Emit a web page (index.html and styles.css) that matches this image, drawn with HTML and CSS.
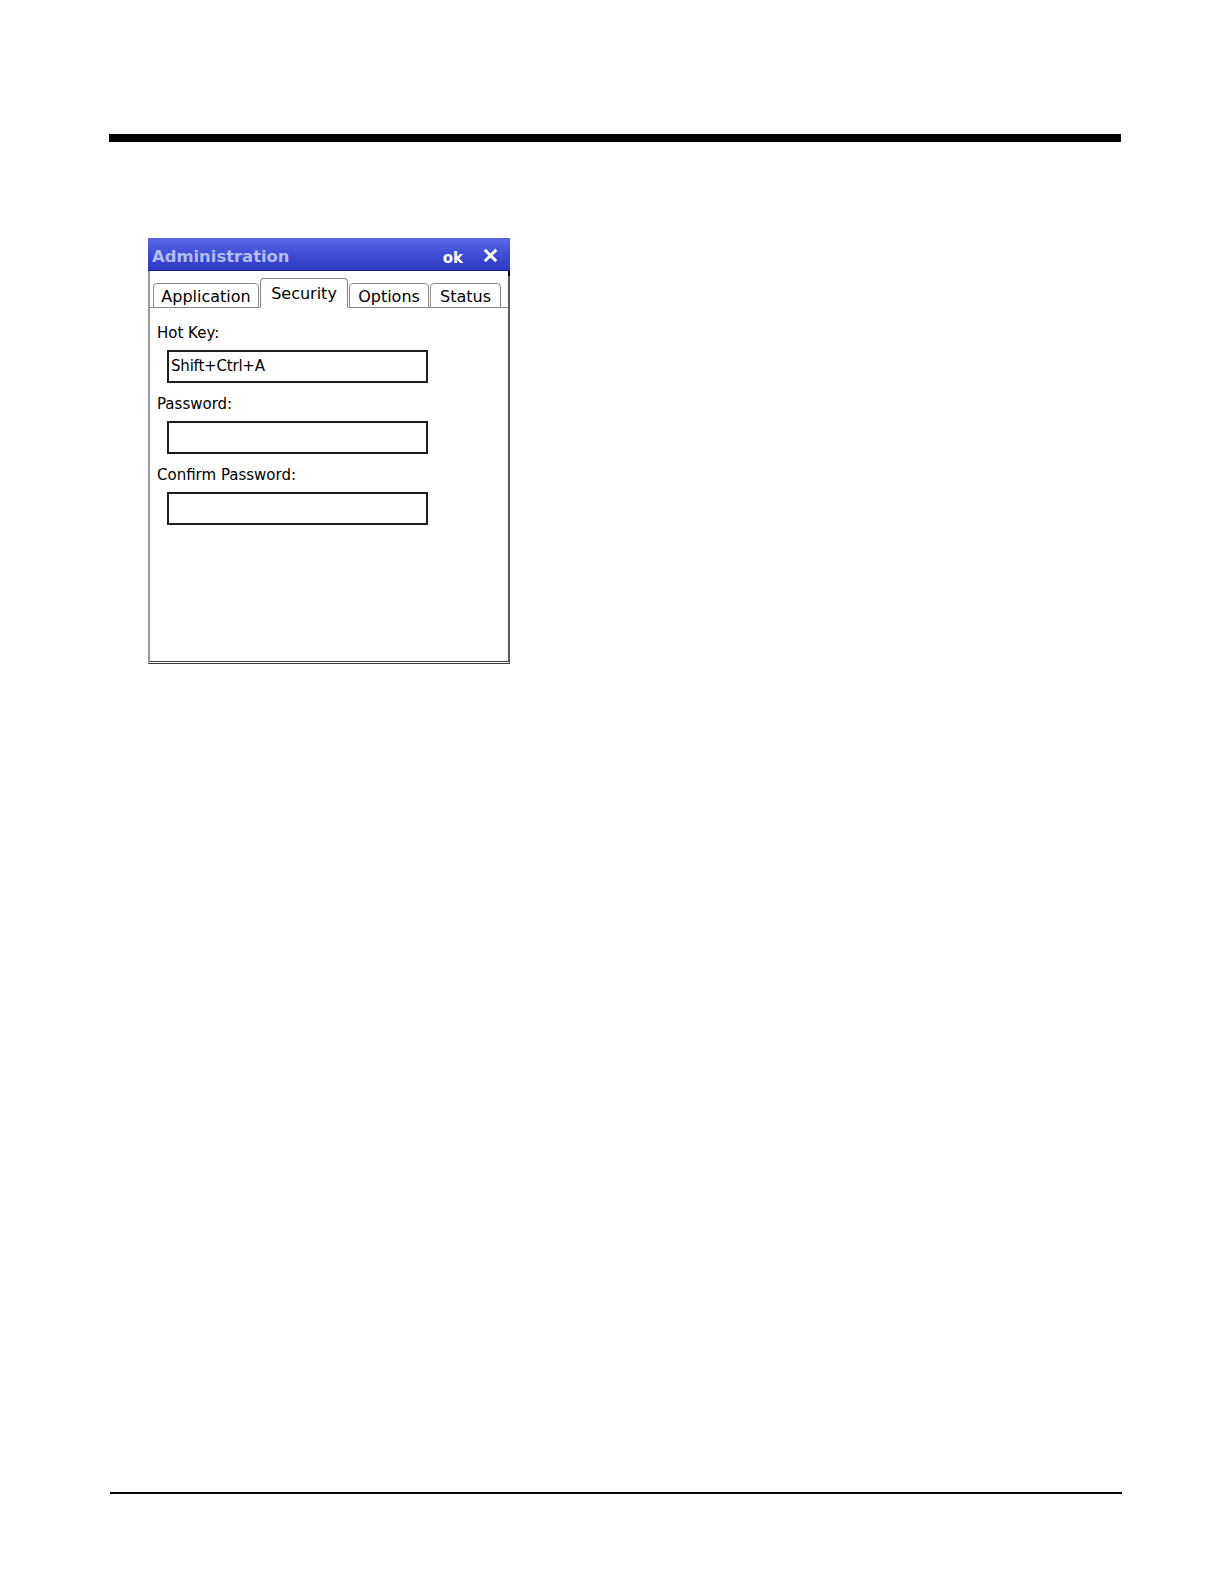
FILE: index.html
```html
<!DOCTYPE html>
<html>
<head>
<meta charset="utf-8">
<link rel="stylesheet" href="styles.css">
</head>
<body>
<div class="page">
  <div class="top-rule"></div>
  <div class="dialog">
    <div class="titlebar">
      <span class="title">Administration</span>
      <span class="ok">ok</span>
      <svg class="close" width="15" height="15" viewBox="0 0 15 15"><path d="M1.7 1.7 L13.3 13.3 M13.3 1.7 L1.7 13.3" stroke="#fff" stroke-width="2.9"/></svg>
    </div>
    <div class="body">
      <div class="tabs">
        <div class="tab t-app">Application</div>
        <div class="tab active t-sec">Security</div>
        <div class="tab t-opt">Options</div>
        <div class="tab t-sta">Status</div>
      </div>
      <div class="content">
        <div class="label">Hot Key:</div>
        <div class="field">Shift+Ctrl+A</div>
        <div class="label">Password:</div>
        <div class="field"></div>
        <div class="label">Confirm Password:</div>
        <div class="field"></div>
      </div>
    </div>
  </div>
  <div class="bottom-rule"></div>
</div>
</body>
</html>
```
FILE: styles.css
```css
html, body {
  margin: 0;
  padding: 0;
  background: #fff;
}
.page {
  padding-top: 134px;
  padding-left: 109px;
  width: 1014px;
}
.top-rule {
  height: 8px;
  background: #000;
  width: 1012px;
}
.dialog {
  margin-top: 96px;
  margin-left: 39px;
  width: 362px;
  height: 426px;
  display: flex;
  flex-direction: column;
  font-family: "DejaVu Sans", sans-serif;
}
.titlebar {
  height: 33px;
  box-sizing: border-box;
  background: linear-gradient(180deg, #5868e4 0%, #4150d8 45%, #2e38c4 100%);
  border-bottom: 1px solid #1c1e86;
  display: flex;
  align-items: flex-start;
  padding-left: 4px;
  padding-right: 12px;
}
.title {
  color: #b3bdf3;
  font-weight: bold;
  font-size: 16.4px;
  line-height: 20px;
  margin-top: 9px;
  flex: 1;
}
.ok {
  color: #fff;
  font-weight: bold;
  font-size: 15px;
  line-height: 20px;
  margin-top: 10px;
  margin-right: 20px;
}
.close {
  display: block;
  margin-top: 10px;
}
.body {
  flex: 1;
  display: flex;
  flex-direction: column;
  border-left: 2px solid #9a9a9a;
  border-right: 2px solid #5a5a5a;
  border-bottom: 3px double #3a3a3a;
  background: #fff;
}
.tabs {
  position: relative;
  box-sizing: border-box;
  height: 37px;
  display: flex;
  align-items: flex-end;
  padding-left: 3px;
  gap: 1px;
  border-bottom: 1px solid #8a8a8a;
}
.tabs::after {
  content: "";
  position: absolute;
  right: -2px;
  top: 0;
  width: 2px;
  height: 5px;
  background: #000;
}
.tab {
  box-sizing: border-box;
  height: 25px;
  margin-bottom: -1px;
  border: 1px solid #8a8a8a;
  border-radius: 4px 4px 0 0;
  font-size: 16px;
  color: #000;
  display: flex;
  align-items: flex-start;
  justify-content: center;
  line-height: 22px;
  padding-top: 2px;
  background: #fff;
}
.tab.active {
  height: 30px;
  border-bottom-color: #fff;
  line-height: 26px;
}
.t-app { width: 106px; }
.t-sec { width: 88px; }
.t-opt { width: 80px; }
.t-sta { width: 71px; }
.content {
  padding-left: 7px;
  padding-top: 14px;
}
.label {
  font-size: 15px;
  color: #000;
  height: 22px;
  line-height: 22px;
}
.field {
  box-sizing: border-box;
  margin-left: 10px;
  width: 261px;
  height: 33px;
  border: 2px solid #1e1e1e;
  margin-top: 6px;
  margin-bottom: 10px;
  font-size: 15px;
  line-height: 28px;
  padding-left: 2px;
  letter-spacing: -0.2px;
}
.bottom-rule {
  margin-top: 828px;
  margin-left: 1px;
  width: 1012px;
  height: 2px;
  background: #000;
}
```
